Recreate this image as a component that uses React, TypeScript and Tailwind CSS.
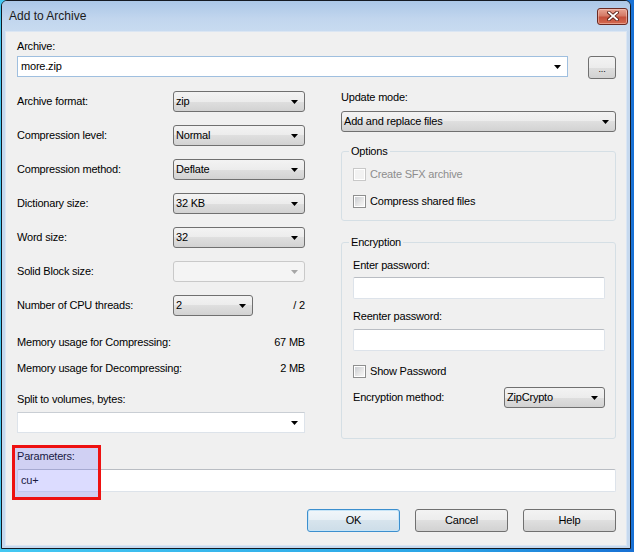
import React from 'react';

const DROP_BG = 'bg-[linear-gradient(#f3f3f3,#ececec_50%,#dfdfdf_50%,#d2d2d2)]';

function Arrow({ disabled }: { disabled?: boolean }) {
  return (
    <svg width="7" height="4" viewBox="0 0 7 4" aria-hidden="true">
      <polygon points="0,0 7,0 3.5,4" fill={disabled ? '#a6a6a6' : '#000'} />
    </svg>
  );
}

// read-only combo box (Win7 button look)
function DropList({ value, width = 'w-[132px]' }: { value: string; width?: string }) {
  return (
    <div
      className={`${width} h-[21px] flex items-center justify-between pl-[2px] pr-[6px] rounded-[3px] border border-[#707070] ${DROP_BG}`}
    >
      <span>{value}</span>
      <Arrow />
    </div>
  );
}

// editable combo box (white field)
function EditCombo({ value, className = '' }: { value?: string; className?: string }) {
  return (
    <div
      className={`h-[21px] flex items-center justify-between pl-[3px] pr-[6px] bg-white border ${className}`}
    >
      <span>{value}</span>
      <Arrow />
    </div>
  );
}

function TextBox({ value, className = '' }: { value?: string; className?: string }) {
  return (
    <div
      className={`flex items-center pl-[3px] bg-white border border-[#dde3ea] border-t-[#b9bdc3] rounded-[2px] ${className}`}
    >
      {value}
    </div>
  );
}

function CheckBox({ label, disabled }: { label: string; disabled?: boolean }) {
  return (
    <div className="flex items-center h-[13px]">
      <span
        className={`w-[13px] h-[13px] p-[1px] border bg-white ${
          disabled ? 'border-[#c8c8c8]' : 'border-[#8e8f8f]'
        }`}
      >
        <span
          className={`block w-full h-full ${
            disabled
              ? 'bg-[#f2f2f2]'
              : 'bg-[linear-gradient(135deg,#c9ccd1,#e8e8e8_60%,#f6f6f6)]'
          }`}
        />
      </span>
      <span className={`ml-[4px] ${disabled ? 'text-[#8d8d8d]' : ''}`}>{label}</span>
    </div>
  );
}

function Button({ label, primary }: { label: string; primary?: boolean }) {
  return (
    <div
      className={`h-[23px] flex items-center justify-center rounded-[3px] border ${
        primary
          ? 'w-[93px] border-[#3c8fce] bg-[linear-gradient(#f1f6fa,#e7eff5_50%,#d7e4ed_50%,#cddde8)] shadow-[inset_0_0_0_1px_#c6e4f7]'
          : `w-[93px] border-[#707070] ${DROP_BG}`
      }`}
    >
      {label}
    </div>
  );
}

const leftRows: { label: string; value: string }[] = [
  { label: 'Archive format:', value: 'zip' },
  { label: 'Compression level:', value: 'Normal' },
  { label: 'Compression method:', value: 'Deflate' },
  { label: 'Dictionary size:', value: '32 KB' },
  { label: 'Word size:', value: '32' },
];

export default function App() {
  return (
    <div className="w-[634px] h-[552px] overflow-hidden bg-[linear-gradient(90deg,#44c8f2,#2aa4e6_70%,#1870d4)] font-['Liberation_Sans',Arial,sans-serif] text-black">
      <div className="ml-[1px] w-[630px] h-[549px] flex flex-col border border-[#141a22] rounded-t-[6px] bg-[#c6d9ef] overflow-hidden">
        {/* Title bar */}
        <div className="h-[30px] shrink-0 flex items-center justify-between pl-[7px] pr-[2px] bg-[linear-gradient(#abc7e7,#c2d6ee_60%,#c8dbf0)]">
          <span className="text-[12px] text-[#1b1b1b]">Add to Archive</span>
          <div className="w-[31px] h-[17px] flex items-center justify-center rounded-[3px] border border-[#6b2a22] bg-[linear-gradient(#e8a493,#d47a66_45%,#c4503c_55%,#d46a50)] shadow-[inset_0_0_0_1px_rgba(255,220,210,0.45)]">
            <svg width="12" height="10" viewBox="0 0 12 10" aria-hidden="true">
              <path d="M2 1.5L10 8.5M10 1.5L2 8.5" stroke="#5b2219" strokeWidth="3.6" strokeLinecap="square" />
              <path d="M2 1.5L10 8.5M10 1.5L2 8.5" stroke="#fff" strokeWidth="1.8" strokeLinecap="square" />
            </svg>
          </div>
        </div>

        {/* Client area */}
        <div className="flex-1 mx-[3px] mb-[2px] flex flex-col bg-[#f0f0f0] border border-[#dbe6f3] pl-[11px] pr-[10px] pt-[8px] text-[11px] tracking-[-0.2px] leading-[13px]">
          <div>Archive:</div>
          <div className="mt-[3px] flex items-start justify-between">
            <EditCombo value="more.zip" className="w-[551px] border-[#9fbfdf]" />
            <div
              className={`w-[28px] h-[23px] flex items-end justify-center pb-[6px] rounded-[3px] border border-[#707070] text-[9px] leading-[6px] ${DROP_BG}`}
            >
              ...
            </div>
          </div>

          <div className="mt-[12px] flex justify-between">
            {/* Left column */}
            <div className="w-[288px] flex flex-col">
              {leftRows.map((r) => (
                <div key={r.label} className="h-[21px] mb-[13px] flex items-center justify-between">
                  <span>{r.label}</span>
                  <DropList value={r.value} />
                </div>
              ))}
              <div className="h-[21px] mb-[13px] flex items-center justify-between">
                <span>Solid Block size:</span>
                <div className="w-[132px] h-[21px] flex items-center justify-end pr-[6px] rounded-[3px] border border-[#c9c9c9] bg-[#f4f4f4]">
                  <Arrow disabled />
                </div>
              </div>
              <div className="h-[21px] mb-[13px] flex items-center">
                <span className="w-[156px]">Number of CPU threads:</span>
                <DropList value="2" width="w-[80px]" />
                <span className="flex-1 text-right">/ 2</span>
              </div>
              <div className="h-[26px] flex items-center justify-between">
                <span>Memory usage for Compressing:</span>
                <span>67 MB</span>
              </div>
              <div className="h-[26px] flex items-center justify-between">
                <span>Memory usage for Decompressing:</span>
                <span>2 MB</span>
              </div>
              <div className="mt-[12px]">Split to volumes, bytes:</div>
              <EditCombo className="mt-[6px] w-full border-[#dde3ea] border-t-[#c9ced4]" />
            </div>

            {/* Right column */}
            <div className="w-[275px] flex flex-col">
              <div>Update mode:</div>
              <div className="mt-[7px]">
                <DropList value="Add and replace files" width="w-full" />
              </div>

              <fieldset className="mt-[13px] border border-[#d5dfe5] rounded-[3px] pl-[11px] pr-[10px] pb-[12px]">
                <legend className="-ml-[4px] px-[2px] leading-[13px]">Options</legend>
                <div className="mt-[10px]">
                  <CheckBox label="Create SFX archive" disabled />
                </div>
                <div className="mt-[14px]">
                  <CheckBox label="Compress shared files" />
                </div>
              </fieldset>

              <fieldset className="mt-[15px] border border-[#d5dfe5] rounded-[3px] pl-[11px] pr-[10px] pb-[30px]">
                <legend className="-ml-[4px] px-[2px] leading-[13px]">Encryption</legend>
                <div className="mt-[10px]">Enter password:</div>
                <TextBox className="mt-[5px] h-[22px]" />
                <div className="mt-[11px]">Reenter password:</div>
                <TextBox className="mt-[6px] h-[22px]" />
                <div className="mt-[14px]">
                  <CheckBox label="Show Password" />
                </div>
                <div className="mt-[9px] flex items-center justify-between">
                  <span>Encryption method:</span>
                  <DropList value="ZipCrypto" width="w-[101px]" />
                </div>
              </fieldset>
            </div>
          </div>

          {/* Parameters */}
          <div className="relative mt-[11px]">
            <div>Parameters:</div>
            <TextBox value="cu+" className="mt-[6px] h-[23px]" />
            <div className="absolute -left-[5px] -top-[5px] w-[89px] h-[55px] border-[3px] border-[#ee1111] bg-[rgba(110,110,255,0.24)]" />
          </div>

          {/* Buttons */}
          <div className="mt-[17px] flex justify-end gap-[15px]">
            <Button label="OK" primary />
            <Button label="Cancel" />
            <Button label="Help" />
          </div>
        </div>
      </div>
    </div>
  );
}
